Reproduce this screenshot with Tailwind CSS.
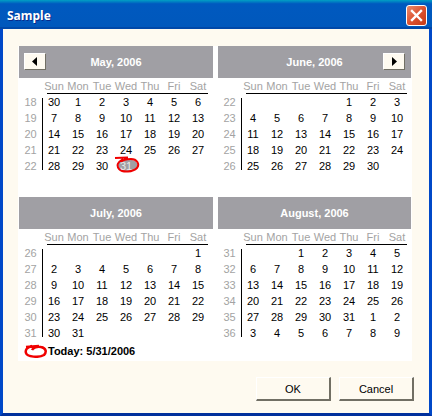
<!DOCTYPE html>
<html lang="en">
<head>
  <meta charset="UTF-8">
  <title>Sample</title>
  <script src="https://cdn.jsdelivr.net/npm/@tailwindcss/browser@4"></script>
</head>
<body class="bg-white">
  <div class="w-[432px] h-[416px] flex flex-col overflow-hidden font-['Liberation_Sans',Arial,sans-serif] text-[11px] leading-[16px] text-black">
    <!-- Title bar -->
    <div class="h-[29px] shrink-0 flex items-center justify-between pl-[7px] pr-[5px] pt-[3px] bg-gradient-to-b from-[#0a9fc4] via-[#0059bf] via-[14%] to-[#0058bc] border-b-2 border-[#0048a8]">
      <span class="mt-[1px] font-['Noto_Sans',sans-serif] font-bold text-[12px] text-white [text-shadow:1px_1px_#0a2a8a]">Sample</span>
      <div class="w-[21px] h-[21px] rounded-[3px] border border-white bg-gradient-to-br from-[#e98a6a] via-[#dd5230] to-[#c63a14] flex items-center justify-center">
        <svg width="13" height="13" viewBox="0 0 13 13"><path d="M2 2 L11 11 M11 2 L2 11" stroke="#fff" stroke-width="2.4" stroke-linecap="square" fill="none"/></svg>
      </div>
    </div>

    <!-- Client area -->
    <div class="flex-1 flex flex-col bg-[#fefaf0] border-x-[3px] border-b-[3px] border-[#0048c8] border-b-[#00309c]">
      <div class="mt-[17px] ml-[15px] w-[394px] h-[315px] bg-white pl-px">
        <div id="months" class="grid grid-cols-[194px_193px] gap-x-[5px] gap-y-[7px]"></div>
        <div class="flex items-center h-[20px] pl-[5px] font-bold">
          <svg class="mr-[1px]" width="23" height="14" viewBox="0 0 23 14"><path d="M2 3 L15 2 M8 2 C3 3 1 6 2 9 C3 13 15 14 20 11 C23 8 22 4 17 3 C13 2 9 4 8 6" stroke="#f00000" stroke-width="2.500" fill="none"/></svg>
          <span>Today: 5/31/2006</span>
        </div>
      </div>
      <div class="flex justify-end gap-[8px] mt-[16px] pr-[15px]">
        <button class="w-[75px] h-[24px] bg-[#fefaf0] border-t border-l border-t-white border-l-white border-r-2 border-b-2 border-r-[#716f64] border-b-[#716f64] text-[11px]">OK</button>
        <button class="w-[75px] h-[24px] bg-[#fefaf0] border-t border-l border-t-white border-l-white border-r-2 border-b-2 border-r-[#716f64] border-b-[#716f64] text-[11px]">Cancel</button>
      </div>
    </div>
  </div>

  <script>
    const dayNames = ['Sun', 'Mon', 'Tue', 'Wed', 'Thu', 'Fri', 'Sat'];
    const months = [
      { title: 'May, 2006', nav: 'prev', firstWeek: 18, rows: [
        [30,1,2,3,4,5,6],[7,8,9,10,11,12,13],[14,15,16,17,18,19,20],[21,22,23,24,25,26,27],[28,29,30,31,'','','']] },
      { title: 'June, 2006', nav: 'next', firstWeek: 22, rows: [
        ['','','','',1,2,3],[4,5,6,7,8,9,10],[11,12,13,14,15,16,17],[18,19,20,21,22,23,24],[25,26,27,28,29,30,'']] },
      { title: 'July, 2006', firstWeek: 26, rows: [
        ['','','','','','',1],[2,3,4,5,6,7,8],[9,10,11,12,13,14,15],[16,17,18,19,20,21,22],[23,24,25,26,27,28,29],[30,31,'','','','','']] },
      { title: 'August, 2006', firstWeek: 31, rows: [
        ['','',1,2,3,4,5],[6,7,8,9,10,11,12],[13,14,15,16,17,18,19],[20,21,22,23,24,25,26],[27,28,29,30,31,1,2],[3,4,5,6,7,8,9]] }
    ];

    const navBtn = (points, side) => `
      <div class="absolute top-[7px] ${side} w-[22px] h-[17px] bg-[#fefaf0] border-t border-l border-t-white border-l-white border-r border-b border-r-[#716f64] border-b-[#716f64] flex items-center justify-center">
        <svg width="6" height="9" viewBox="0 0 6 9"><polygon points="${points}" fill="#000"/></svg>
      </div>`;

    const todayCell = `
      <div class="relative w-[24px] text-center text-[#e8e8e8]">
        <svg class="absolute left-0 top-[-7px]" width="26" height="22" viewBox="0 0 26 22"><ellipse cx="14" cy="14.500" rx="10" ry="6" fill="#a09fa4"/><path d="M1 7 L14 6.500 M9 8 C4 11 2 14 5 18 C9 22 19 21 23 17 C26 13 23 8 17 8 C13 8 9 8 7 11" stroke="#f00000" stroke-width="2" fill="none"/></svg>
        <span class="relative">31</span>
      </div>`;

    document.getElementById('months').innerHTML = months.map(m => `
      <div>
        <div class="relative h-[32px] bg-[#a09fa4] flex items-center justify-center font-bold text-white">
          ${m.nav === 'prev' ? navBtn('5,0 5,9 0,4.500', 'left-[5px]') : ''}
          ${m.nav === 'next' ? navBtn('1,0 1,9 6,4.500', 'right-[6px]') : ''}
          <span>${m.title}</span>
        </div>
        <div class="flex pl-[23px] h-[15px] items-center text-[#a3a3a3]">
          ${dayNames.map(d => `<div class="w-[24px] text-center">${d}</div>`).join('')}
        </div>
        <div class="ml-[28px] w-[161px] h-px bg-black"></div>
        <div class="flex h-[96px]">
          <div class="w-[23px] shrink-0 text-center text-[#a3a3a3]">
            ${m.rows.map((r, i) => `<div class="h-[16px]">${m.firstWeek + i}</div>`).join('')}
          </div>
          <div class="relative">
            <div class="absolute left-0 top-[4px] w-px bg-black" style="height:${m.rows.length * 16 - 8}px"></div>
            ${m.rows.map(r => `<div class="flex h-[16px]">${r.map(d => d === 31 && m.title === 'May, 2006' ? todayCell : `<div class="w-[24px] text-center">${d}</div>`).join('')}</div>`).join('')}
          </div>
        </div>
      </div>`).join('');
  </script>
</body>
</html>
